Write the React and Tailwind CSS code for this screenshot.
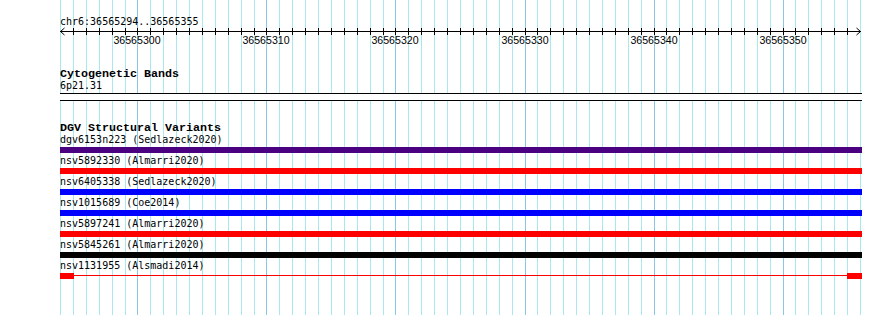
import React from 'react';

const SCALE = 800 / 62;
const gridX = Array.from({ length: 63 }, (_, k) => Math.round(60 + k * SCALE));
const majors = [
	{ k: 6, label: '36565300' },
	{ k: 16, label: '36565310' },
	{ k: 26, label: '36565320' },
	{ k: 36, label: '36565330' },
	{ k: 46, label: '36565340' },
	{ k: 56, label: '36565350' },
];

const variants = [
	{ name: 'dgv6153n223 (Sedlazeck2020)', color: 'bg-[#4b0082]' },
	{ name: 'nsv5892330 (Almarri2020)', color: 'bg-[#ff0000]' },
	{ name: 'nsv6405338 (Sedlazeck2020)', color: 'bg-[#0000ff]' },
	{ name: 'nsv1015689 (Coe2014)', color: 'bg-[#0000ff]' },
	{ name: 'nsv5897241 (Almarri2020)', color: 'bg-[#ff0000]' },
	{ name: 'nsv5845261 (Almarri2020)', color: 'bg-black' },
];

const mono = "font-['DejaVu_Sans_Mono',monospace] text-[10px] leading-[12px] text-black whitespace-pre";
const title = "font-['Liberation_Mono',monospace] font-bold text-[11.67px] leading-[12px] text-black whitespace-pre";

// vertical guide lines behind the tracks
const Grid = () => (
	<svg className='absolute inset-0' width='862' height='315'>
		{gridX.map((x, k) => (
			<line
				key={k}
				x1={x + 0.5}
				x2={x + 0.5}
				y1='0'
				y2='315'
				stroke={(k - 6) % 10 === 0 ? '#8cc6e6' : '#a8e8ee'}
				strokeWidth='1'
			/>
		))}
	</svg>
);

const Ruler = () => (
	<svg className='block overflow-visible' width='802' height='7'>
		<line x1='0' x2='801' y1='3.5' y2='3.5' stroke='black' strokeWidth='1' />
		{gridX.slice(1, -1).map((x) => (
			<line key={x} x1={x - 60 + 0.5} x2={x - 60 + 0.5} y1='0' y2='7' stroke='black' strokeWidth='1' />
		))}
		<polyline points='4.5,0 0.5,3.5 4.5,7' fill='none' stroke='black' strokeWidth='1' />
		<polyline points='796.5,0 800.5,3.5 796.5,7' fill='none' stroke='black' strokeWidth='1' />
	</svg>
);

const App = () => {
	return (
		<div className='w-[890px] h-[315px] bg-white overflow-hidden'>
			<div className='relative w-[862px] h-[315px] bg-white'>
				<Grid />

				<div className='relative pl-[60px] pt-[16px] w-[862px]'>
					{/* Ruler */}
					<div className={mono}>chr6:36565294..36565355</div>
					<Ruler />
					<div className='relative h-[11px] w-[802px]'>
						{majors.map((m) => (
							<span
								key={m.k}
								className="absolute top-0 -translate-x-1/2 font-['Liberation_Sans',Arial,sans-serif] text-[10.6px] leading-[11px] text-black"
								style={{ left: gridX[m.k] - 60 }}
							>
								{m.label}
							</span>
						))}
					</div>

					{/* Cytogenetic Bands */}
					<div className={`mt-[22px] ${title}`}>Cytogenetic Bands</div>
					<div className={mono}>6p21.31</div>
					<div className='mt-px h-[8px] w-[802px] border-y border-black bg-white' />

					{/* DGV Structural Variants */}
					<div className={`mt-[21px] ${title}`}>DGV Structural Variants</div>
					{variants.map((v) => (
						<div key={v.name} className='mb-[2px]'>
							<div className={mono}>{v.name}</div>
							<div className={`mt-px h-[6px] w-[802px] ${v.color}`} />
						</div>
					))}
					<div>
						<div className={mono}>nsv1131955 (Alsmadi2014)</div>
						<div className='mt-px flex w-[802px] h-[6px]'>
							<div className='w-[14px] h-[6px] bg-[#ff0000]' />
							<div className='flex-1 pt-[2px]'>
								<div className='h-px bg-[#ff0000]' />
							</div>
							<div className='w-[15px] h-[6px] bg-[#ff0000]' />
						</div>
					</div>
				</div>
			</div>
		</div>
	);
};

export default App;
